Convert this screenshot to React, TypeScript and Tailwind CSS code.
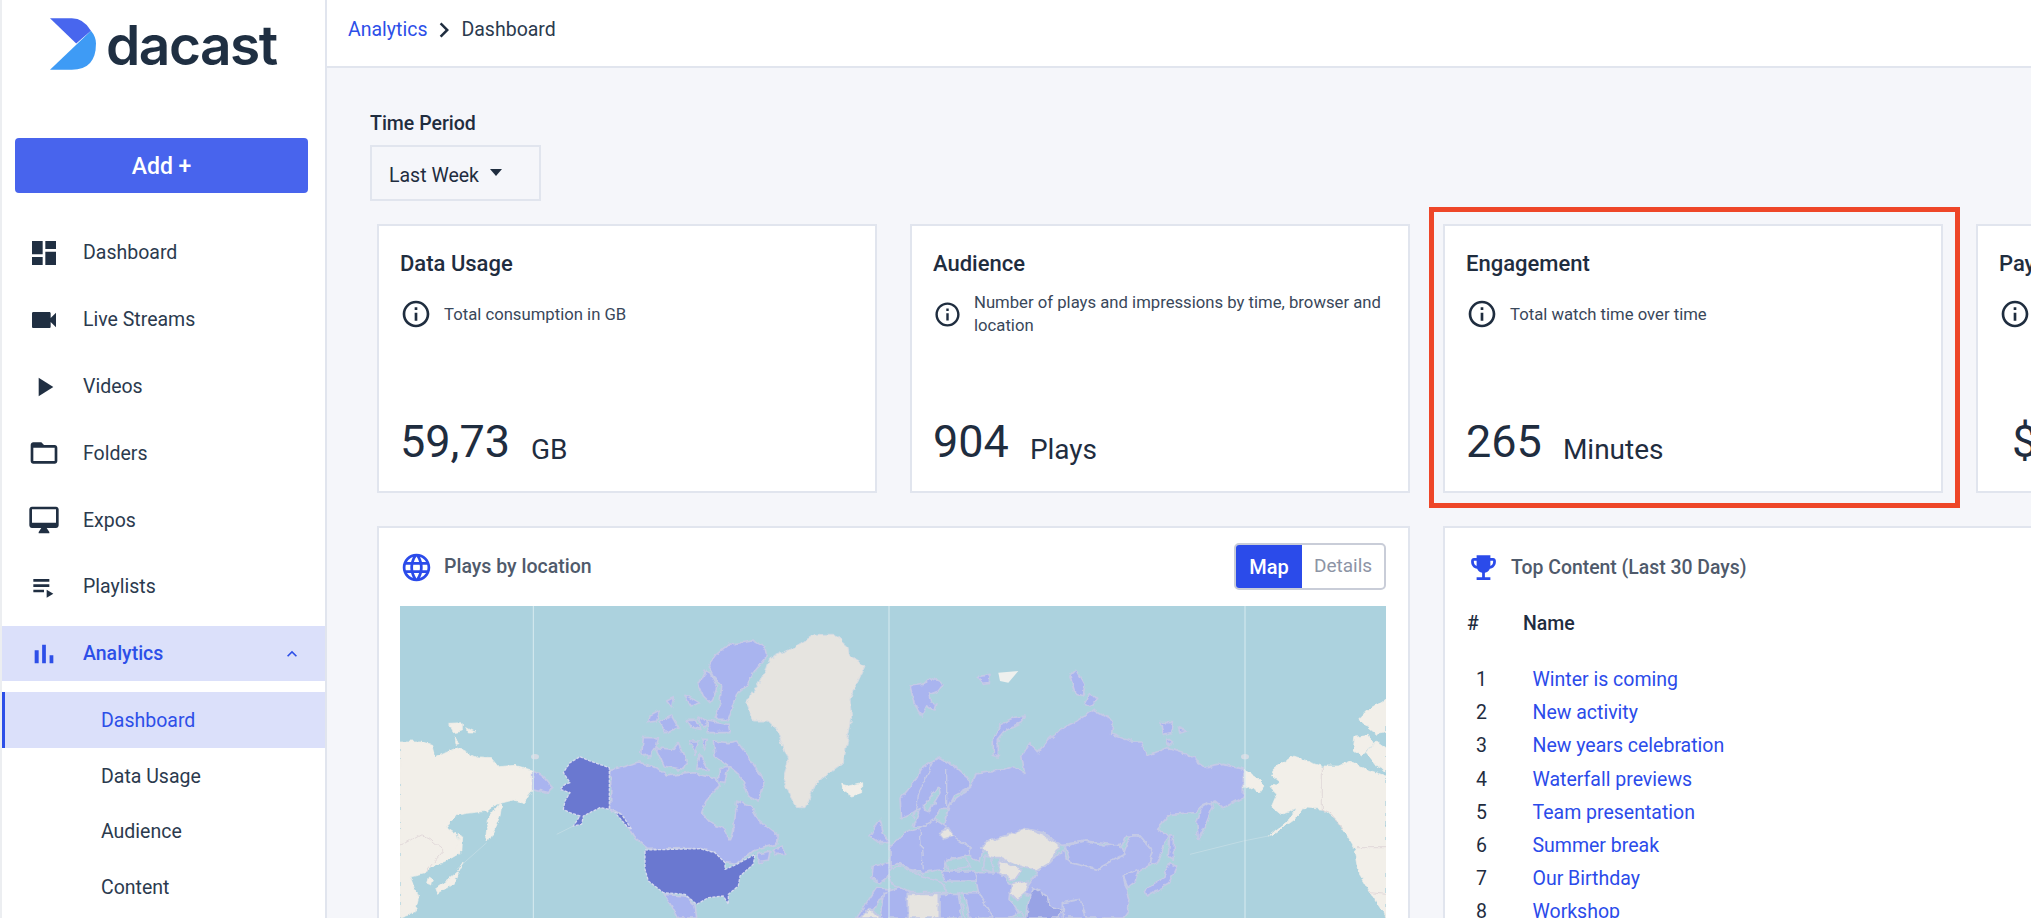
import React from "react";

const icons = {
  dashboard: "M3 13h8V3H3v10zm0 8h8v-6H3v6zm10 0h8V11h-8v10zm0-18v6h8V3h-8z",
  videocam: "M17 10.5V7c0-.55-.45-1-1-1H4c-.55 0-1 .45-1 1v10c0 .55.45 1 1 1h12c.55 0 1-.45 1-1v-3.5l4 4v-11l-4 4z",
  play: "M8 5v14l11-7z",
  folder: "M20 6h-8l-2-2H4c-1.1 0-1.99.9-1.99 2L2 18c0 1.1.9 2 2 2h16c1.1 0 2-.9 2-2V8c0-1.1-.9-2-2-2zm0 12H4V8h16v10z",
  desktop: "M21 2H3c-1.1 0-2 .9-2 2v12c0 1.1.9 2 2 2h7l-2 3v1h8v-1l-2-3h7c1.1 0 2-.9 2-2V4c0-1.1-.9-2-2-2zm0 12H3V4h18v10z",
  playlist: "M4 10h12v2H4zm0-4h12v2H4zm0 8h8v2H4zm10 0v6l5-3z",
  bars: "M5 9.2h3V19H5zM10.6 5h2.8v14h-2.8zm5.6 8H19v6h-2.8z",
  expandLess: "M12 8l-6 6 1.41 1.41L12 10.83l4.59 4.58L18 14z",
  chevronRight: "M10 6L8.59 7.41 13.17 12l-4.58 4.59L10 18l6-6z",
  info: "M11 7h2v2h-2zm0 4h2v6h-2zm1-9C6.48 2 2 6.48 2 12s4.48 10 10 10 10-4.48 10-10S17.52 2 12 2zm0 18c-4.41 0-8-3.59-8-8s3.59-8 8-8 8 3.59 8 8-3.59 8-8 8z",
  globe: "M11.99 2C6.47 2 2 6.48 2 12s4.47 10 9.99 10C17.52 22 22 17.52 22 12S17.52 2 11.99 2zm6.93 6h-2.95c-.32-1.25-.78-2.45-1.38-3.56 1.84.63 3.37 1.91 4.33 3.56zM12 4.04c.83 1.2 1.48 2.53 1.91 3.96h-3.82c.43-1.43 1.08-2.76 1.91-3.96zM4.26 14C4.1 13.36 4 12.69 4 12s.1-1.36.26-2h3.38c-.08.66-.14 1.32-.14 2 0 .68.06 1.34.14 2H4.26zm.82 2h2.95c.32 1.25.78 2.45 1.38 3.56-1.84-.63-3.37-1.9-4.33-3.56zm2.95-8H5.08c.96-1.66 2.49-2.93 4.33-3.56C8.81 5.55 8.35 6.75 8.03 8zM12 19.96c-.83-1.2-1.48-2.53-1.91-3.96h3.82c-.43 1.43-1.08 2.76-1.91 3.96zM14.34 14H9.66c-.09-.66-.16-1.32-.16-2 0-.68.07-1.35.16-2h4.68c.09.65.16 1.32.16 2 0 .68-.07 1.34-.16 2zm.25 5.56c.6-1.11 1.06-2.31 1.38-3.56h2.95c-.96 1.65-2.49 2.93-4.33 3.56zM16.36 14c.08-.66.14-1.32.14-2 0-.68-.06-1.34-.14-2h3.38c.16.64.26 1.31.26 2s-.1 1.36-.26 2h-3.38z",
  trophy: "M19 5h-2V3H7v2H5c-1.1 0-2 .9-2 2v1c0 2.55 1.92 4.63 4.39 4.94.63 1.5 1.98 2.63 3.61 2.96V19H7v2h10v-2h-4v-3.1c1.63-.33 2.98-1.46 3.61-2.96C19.08 12.63 21 10.55 21 8V7c0-1.1-.9-2-2-2zM5 8V7h2v3.82C5.84 10.4 5 9.3 5 8zm14 0c0 1.3-.84 2.4-2 2.82V7h2v1z",
};

function Icon({ d, className }: { d: string; className?: string }) {
  return (
    <svg viewBox="0 0 24 24" fill="currentColor" className={className}>
      <path d={d} />
    </svg>
  );
}

const navItems = [
  { label: "Dashboard", icon: icons.dashboard },
  { label: "Live Streams", icon: icons.videocam },
  { label: "Videos", icon: icons.play },
  { label: "Folders", icon: icons.folder },
  { label: "Expos", icon: icons.desktop },
  { label: "Playlists", icon: icons.playlist },
];

const stats = [
  { title: "Data Usage", desc: "Total consumption in GB", value: "59,73", unit: "GB" },
  { title: "Audience", desc: "Number of plays and impressions by time, browser and location", value: "904", unit: "Plays" },
  { title: "Engagement", desc: "Total watch time over time", value: "265", unit: "Minutes", marked: true },
  { title: "Paywall", desc: "Revenue from your paywall", value: "$", unit: "", indent: true },
];

const topContent = [
  "Winter is coming",
  "New activity",
  "New years celebration",
  "Waterfall previews",
  "Team presentation",
  "Summer break",
  "Our Birthday",
  "Workshop",
];

// map shapes, coordinates are 3x px from the map's top left corner
const creamLand = [
  "M0 405 L60 405 L95 415 L105 455 L170 425 L230 455 L275 458 L295 482 L345 478 L398 492 L398 555 L370 590 L340 582 L290 595 L265 615 L200 622 L165 630 L140 665 L170 685 L182 740 L130 770 L110 775 L75 800 L30 810 L55 880 L45 920 L0 936 Z",
  "M300 590 L285 610 L262 640 L258 690 L265 705 L285 665 L300 630 L305 600 Z",
  "M175 685 L185 690 L182 745 L172 735 Z",
  "M190 770 L170 800 L140 825 L105 850 L112 865 L160 835 L175 800 Z",
  "M85 810 L100 820 L95 840 L80 835 Z",
  "M145 352 L190 350 L190 375 L160 380 Z",
  "M200 365 L225 378 L205 378 Z",
  "M165 395 L180 410 L168 412 Z",
  "M1325 535 L1345 540 L1385 530 L1385 560 L1355 570 L1330 555 Z",
  "M2533 490 L2565 510 L2595 540 L2580 560 L2545 540 L2533 545 Z",
  "M2620 490 L2675 450 L2765 480 L2815 480 L2850 465 L2900 490 L2958 510 L2958 936 L2950 920 L2910 860 L2880 810 L2865 730 L2810 640 L2770 610 L2710 605 L2685 640 L2620 685 L2605 690 L2670 640 L2690 610 L2645 625 L2615 600 L2630 565 L2610 545 L2640 530 L2615 510 Z",
  "M2865 390 L2905 385 L2920 415 L2885 450 L2860 430 Z",
  "M2900 440 L2930 405 L2958 425 L2958 495 L2930 480 Z",
  "M2875 340 L2900 315 L2958 280 L2958 380 L2930 385 L2900 360 Z",
];

const grayLand = [
  "M1245 85 L1300 85 L1340 120 L1345 145 L1395 180 L1350 280 L1355 340 L1330 470 L1250 530 L1215 605 L1190 605 L1170 570 L1150 520 L1165 460 L1130 370 L1105 345 L1060 345 L1040 290 L1095 200 L1110 155 L1180 125 Z",
];

const lilacLand = [
  // canada and arctic islands
  "M632 490 L680 480 L715 468 L770 485 L800 510 L880 500 L950 520 L960 540 L920 580 L905 620 L930 650 L975 670 L990 705 L1000 680 L1010 585 L1050 600 L1075 640 L1135 690 L1130 715 L1060 735 L1010 775 L975 770 L950 745 L900 727 L745 730 L700 690 L660 625 L632 610 Z",
  "M985 115 L1060 105 L1095 125 L1100 150 L1060 200 L1040 240 L1010 265 L985 340 L945 340 L960 290 L965 240 L945 220 L925 180 L950 145 Z",
  "M915 195 L930 200 L950 240 L945 265 L930 290 L910 270 L895 235 Z",
  "M750 330 L780 315 L770 345 L745 350 Z",
  "M780 345 L815 330 L835 365 L795 380 Z",
  "M855 265 L900 290 L870 300 Z",
  "M860 340 L890 340 L900 370 L875 365 Z",
  "M800 285 L820 275 L815 305 Z",
  "M920 345 L985 355 L990 380 L925 380 Z",
  "M895 330 L925 350 L910 365 Z",
  "M730 395 L775 395 L770 420 L745 455 L725 440 Z",
  "M765 425 L820 430 L835 410 L860 470 L850 490 L790 480 Z",
  "M940 405 L985 410 L1010 405 L1050 460 L1095 525 L1075 585 L1045 570 L1030 530 L1010 500 L980 475 L945 450 Z",
  "M870 405 L895 405 L885 445 Z",
  "M905 400 L925 400 L915 430 Z",
  "M900 445 L925 490 L890 490 Z",
  "M958 490 L985 480 L975 530 L955 525 Z",
  "M1120 730 L1145 720 L1155 745 L1125 745 Z",
  "M1070 745 L1110 735 L1105 765 L1080 770 Z",
  "M790 865 L855 870 L885 895 L890 936 L835 936 L810 890 Z",
  "M398 495 L430 510 L460 545 L445 560 L405 550 L398 550 Z",
  // uk, france, west africa
  "M1410 690 L1440 640 L1450 680 L1470 710 L1440 710 Z",
  "M1420 780 L1470 770 L1480 800 L1440 830 L1415 815 Z",
  "M1480 720 L1530 720 L1530 780 L1470 770 Z",
  "M1370 936 L1400 890 L1430 845 L1480 850 L1430 890 L1410 936 Z",
  "M1450 860 L1530 835 L1530 936 L1440 936 Z",
  // svalbard and northern islands
  "M1530 240 L1570 235 L1590 215 L1630 235 L1615 255 L1590 265 L1595 290 L1610 295 L1605 315 L1580 300 L1565 330 L1545 300 Z",
  "M1735 212 L1770 205 L1768 230 L1750 232 Z",
  "M2030 190 L2055 235 L2050 270 L2025 260 L2010 210 Z",
  "M2070 260 L2090 280 L2070 300 L2055 290 Z",
  "M1875 330 L1860 350 L1820 370 L1795 400 L1795 450 L1780 445 L1780 400 L1800 355 L1840 335 Z",
  "M2280 350 L2320 350 L2315 380 L2290 385 Z",
  "M2335 365 L2360 375 L2340 382 Z",
  "M2300 395 L2320 410 L2305 420 Z",
  // russia
  "M1650 590 L1710 545 L1730 500 L1815 490 L1840 480 L1875 505 L1865 450 L1890 410 L1915 440 L1945 405 L1980 370 L2030 345 L2080 310 L2140 345 L2135 385 L2190 405 L2225 405 L2240 450 L2300 425 L2360 445 L2420 485 L2470 475 L2530 490 L2530 575 L2470 605 L2445 585 L2405 600 L2385 620 L2310 625 L2270 670 L2305 690 L2270 770 L2245 780 L2260 735 L2220 690 L2180 690 L2165 720 L2060 705 L1990 715 L1970 710 L1930 680 L1875 668 L1825 690 L1755 710 L1740 770 L1705 745 L1710 725 L1670 700 L1630 660 Z",
  // china, mongolia
  "M1990 730 L2000 760 L2090 790 L2170 745 L2190 690 L2220 690 L2260 735 L2245 780 L2210 800 L2170 810 L2180 850 L2190 880 L2185 915 L2170 936 L1950 936 L1935 880 L1870 860 L1915 795 L1950 770 Z",
  "M1995 720 L2055 705 L2110 720 L2160 715 L2175 745 L2090 790 L2010 770 Z",
  // japan, korea, kamchatka
  "M2170 810 L2215 790 L2205 830 L2185 845 Z",
  "M2310 770 L2330 780 L2305 835 L2240 870 L2235 850 L2290 815 L2300 790 Z",
  "M2310 685 L2320 690 L2320 760 L2305 750 Z",
  "M2435 585 L2440 600 L2415 660 L2395 700 L2390 650 L2405 605 Z",
  // scandinavia, europe, middle east
  "M1500 580 L1550 520 L1560 490 L1620 455 L1670 485 L1710 520 L1705 545 L1660 570 L1640 610 L1620 610 L1590 660 L1540 660 L1560 610 L1505 635 Z",
  "M1470 720 L1515 680 L1560 665 L1605 640 L1635 660 L1670 700 L1710 725 L1705 745 L1670 755 L1640 760 L1630 790 L1570 800 L1530 790 L1500 770 L1470 780 Z",
  "M1625 795 L1725 795 L1730 825 L1635 825 Z",
  "M1725 800 L1800 800 L1835 840 L1830 880 L1865 936 L1760 936 L1735 860 Z",
  "M1620 865 L1675 865 L1685 936 L1620 936 Z",
  "M1685 860 L1735 860 L1780 936 L1695 936 Z",
  "M1990 890 L2040 880 L2060 936 L1990 936 Z",
];

const grayPatches = [
  "M1745 720 L1770 705 L1830 685 L1875 668 L1930 685 L1980 720 L1950 770 L1910 795 L1860 780 L1800 755 L1770 755 Z",
  "M1800 760 L1865 790 L1840 825 L1795 800 Z",
  "M1835 835 L1885 825 L1875 860 L1850 880 L1830 860 Z",
  "M1615 680 L1645 665 L1660 690 L1630 700 Z",
  "M1525 865 L1615 865 L1615 936 L1525 936 Z",
  "M1380 936 L1410 905 L1440 936 Z",
];

const seaPatches = [
  "M1570 600 L1615 540 L1620 560 L1585 620 Z",
  "M1635 765 L1695 755 L1710 780 L1645 795 Z",
  "M1755 750 L1775 755 L1780 800 L1750 790 Z",
  "M1470 790 L1500 780 L1570 810 L1625 830 L1640 860 L1620 860 L1530 860 L1470 830 Z",
  "M1678 862 L1690 862 L1710 936 L1695 936 Z",
  "M1830 936 L1860 920 L1880 936 Z",
];

const darkLand = [
  "M540 452 L570 465 L628 485 L628 610 L600 605 L570 620 L550 630 L545 655 L520 660 L540 630 L510 620 L490 610 L495 585 L510 560 L480 550 L495 535 L510 530 L490 500 L510 470 Z",
  "M735 732 L900 728 L945 740 L975 770 L975 790 L1010 775 L1065 745 L1060 775 L1020 810 L1015 840 L985 865 L985 895 L970 870 L925 875 L890 895 L855 865 L790 860 L745 825 L735 790 Z",
  "M645 620 L665 625 L695 670 L680 660 Z",
];

function WorldMap() {
  return (
    <svg viewBox="0 0 2958 936" preserveAspectRatio="none" className="block h-full w-full blur-[0.6px]">
      <defs>
        {/* rough coastlines */}
        <filter id="coast" filterUnits="userSpaceOnUse" x="0" y="0" width="2958" height="936">
          <feTurbulence type="fractalNoise" baseFrequency="0.045" numOctaves="3" seed="4" />
          <feDisplacementMap in="SourceGraphic" scale="16" xChannelSelector="R" yChannelSelector="G" />
        </filter>
      </defs>
      <rect width="2958" height="936" fill="#acd2de" />
      <path d="M470 685 L520 660 M170 790 L260 710 M2370 745 L2530 705 L2605 690" stroke="#bfdbe4" strokeWidth="3" fill="none" />
      <g filter="url(#coast)">
        {creamLand.map((d, i) => (
          <path key={i} d={d} fill="#f2efe9" stroke="#f2efe9" strokeWidth="2" />
        ))}
        <path d="M0 720 L60 685 L90 700 L130 735 L100 770 L75 800 M2767 480 L2767 610 L2790 620 L2830 670 M2870 725 L2958 725 M2910 860 L2958 865" stroke="#d9cdd2" strokeWidth="2" fill="none" />
        {grayLand.map((d, i) => (
          <path key={i} d={d} fill="#e6e4e0" stroke="#d5dbe4" strokeWidth="3" strokeLinejoin="round" />
        ))}
        <g stroke="#c5cae6" strokeWidth="5" strokeLinejoin="round">
          {lilacLand.map((d, i) => (
            <path key={i} d={d} fill={i >= 33 && i < 36 ? "#adb7ef" : "#a9b4ef"} />
          ))}
          {grayPatches.map((d, i) => (
            <path key={i} d={d} fill="#e6e4e0" />
          ))}
          {seaPatches.map((d, i) => (
            <path key={i} d={d} fill="#acd2de" />
          ))}
          <path d="M1900 845 L1940 870 L1950 900 L1990 910 L1970 936 L1880 936 L1885 890 Z" fill="#98a3e5" />
          <path d="M1600 470 L1560 550 L1540 640 M1640 490 L1640 600 M1560 670 L1570 790" fill="none" strokeWidth="4" />
        </g>
      </g>
      <g stroke="#d5d9ee" strokeWidth="4" strokeDasharray="9 4" strokeLinejoin="round">
        {darkLand.map((d, i) => (
          <path key={i} d={d} fill="#6a78d0" />
        ))}
      </g>
      <path d="M1795 200 L1855 195 L1825 230 L1800 225 Z" fill="#eef0ee" />
      <ellipse cx="405" cy="452" rx="12" ry="8" fill="#d5dbe4" />
      <ellipse cx="2535" cy="452" rx="12" ry="8" fill="#d5dbe4" />
      <path d="M400 0 V936 M1467 0 V936 M2535 0 V936" stroke="#d8ebf0" strokeWidth="3" />
    </svg>
  );
}

function Sidebar() {
  return (
    <aside className="flex h-full w-[327px] shrink-0 flex-col border-r-2 border-l-2 border-r-[#e1e5ee] border-l-[#eceef1] bg-white pt-[18px] text-[#2b3a4e]">
      <div className="flex h-[52px] items-start pl-[48px]">
        <svg viewBox="150 55 137 153" className="h-[52px] w-[46px]">
          <path d="M150 208 L272 92 Q287 110 287 130 Q287 208 215 208 Z" fill="#3e9bf5" />
          <path d="M150 55 L215 55 Q250 55 272 92 L228 130 Z" fill="#4866ee" />
        </svg>
        <span className="mt-[-7px] ml-[10px] font-['Inter',sans-serif] text-[55px] leading-[68px] font-semibold tracking-[-1.5px] text-[#1f2f42]">
          dacast
        </span>
      </div>
      <button className="mt-[68px] mr-[17px] ml-[13px] h-[55px] rounded-[4px] bg-[#4864ed] pt-[3px] text-[23px] font-medium text-white">
        Add +
      </button>
      <nav className="mt-[32.5px] flex flex-col gap-[11.8px]">
        {navItems.map((item) => (
          <a key={item.label} className="flex h-[55px] items-center pl-[26px] text-[19.5px]">
            <Icon d={item.icon} className="h-[32px] w-[32px] text-[#202f42]" />
            <span className="ml-[23px]">{item.label}</span>
          </a>
        ))}
        <a className="flex h-[55px] items-center bg-[#dbe0fa] pl-[26px] text-[19.5px] font-medium text-[#2d4fe8]">
          <Icon d={icons.bars} className="h-[32px] w-[32px]" />
          <span className="ml-[23px]">Analytics</span>
          <Icon d={icons.expandLess} className="mr-[23px] ml-auto h-[20px] w-[20px]" />
        </a>
      </nav>
      <div className="mt-[11px] flex flex-col">
        <a className="flex h-[56px] items-center border-l-[3px] border-l-[#2d4fe8] bg-[#dbe0fa] pl-[96px] text-[19.5px] text-[#2d4fe8]">
          Dashboard
        </a>
        {["Data Usage", "Audience", "Content"].map((label) => (
          <a key={label} className="flex h-[55.7px] items-center pl-[99px] text-[19.5px]">
            {label}
          </a>
        ))}
      </div>
    </aside>
  );
}

function StatCard({ stat }: { stat: (typeof stats)[number] }) {
  const iconSize = stat.desc.length > 50 ? "h-[29px] w-[29px]" : "h-[32px] w-[32px]";
  return (
    <div className="relative h-[269px] w-[500px] shrink-0">
      {stat.marked && <div className="absolute -top-[17px] -right-[17px] -bottom-[15px] -left-[14px] border-[5px] border-[#ee4628]" />}
      <div className="flex h-full flex-col border-2 border-[#e1e5ee] bg-white pt-[25px] pr-[16px] pb-[23px] pl-[21px] text-[#1f2d3f]">
        <h3 className="text-[22px] leading-[26px] font-medium whitespace-nowrap">{stat.title}</h3>
        <div className="mt-[21px] flex h-[32px] items-center gap-[12px]">
          <Icon d={icons.info} className={`${iconSize} shrink-0 text-[#1f2d3f]`} />
          <p className="text-[16.7px] leading-[23px] text-[#39475a]">{stat.desc}</p>
        </div>
        <div className={`mt-auto flex items-baseline gap-[21px] ${stat.indent ? "pl-[13px]" : ""}`}>
          <span className="text-[45px] leading-[52px]">{stat.value}</span>
          <span className="translate-y-[2px] text-[28px] leading-[32px]">{stat.unit}</span>
        </div>
      </div>
    </div>
  );
}

function LocationCard() {
  return (
    <div className="w-[1033px] shrink-0 border-2 border-[#e1e5ee] bg-white pt-[14px] pr-[22px] pb-[20px] pl-[21px]">
      <div className="flex h-[49px] items-center justify-between">
        <div className="flex items-center gap-[11px] pt-[1px]">
          <Icon d={icons.globe} className="h-[33px] w-[33px] text-[#2b4bea]" />
          <span className="text-[19.5px] font-medium text-[#4f5a6b]">Plays by location</span>
        </div>
        <div className="flex h-[47px] w-[152px] overflow-hidden rounded-[5px] border-2 border-[#c9cdd8]">
          <span className="flex w-[66px] items-center justify-center bg-[#2b4bea] text-[20px] font-medium text-white">Map</span>
          <span className="flex flex-1 items-center justify-center text-[19px] text-[#8d94a5]">Details</span>
        </div>
      </div>
      <div className="mt-[15px] h-[312px] w-full">
        <WorldMap />
      </div>
    </div>
  );
}

function TopContentCard() {
  return (
    <div className="w-[1033px] shrink-0 border-2 border-[#e1e5ee] bg-white pt-[15px] pl-[22px]">
      <div className="flex h-[49px] items-center gap-[11px]">
        <Icon d={icons.trophy} className="h-[33px] w-[33px] text-[#2b4bea]" />
        <span className="text-[19.4px] font-medium text-[#4f5a6b]">Top Content (Last 30 Days)</span>
      </div>
      <div className="mt-[20px] flex h-[24px] items-center text-[19.5px] font-medium text-[#1f2d3f]">
        <span className="w-[56px]">#</span>
        <span>Name</span>
      </div>
      <div className="mt-[27px] flex flex-col">
        {topContent.map((name, i) => (
          <div key={name} className="flex h-[33.2px] items-center text-[19.5px]">
            <span className="w-[29px] text-center text-[#1f2d3f]">{i + 1}</span>
            <a className="ml-[36.5px] text-[#2b4bea]">{name}</a>
          </div>
        ))}
      </div>
    </div>
  );
}

export default function App() {
  return (
    <div className="flex h-[918px] w-[2031px] overflow-hidden bg-[#f5f6fa] font-['Roboto',sans-serif]">
      <Sidebar />
      <main className="flex min-w-0 flex-1 flex-col">
        <header className="flex h-[68px] shrink-0 items-center gap-[2px] border-b-2 border-[#e1e5ee] bg-white pb-[7px] pl-[21px] text-[19.5px]">
          <a className="text-[#2d4fe8]">Analytics</a>
          <Icon d={icons.chevronRight} className="h-[30px] w-[30px] text-[#1f2d3f]" />
          <span className="text-[#2b3a4e]">Dashboard</span>
        </header>
        <div className="pt-[44px] pl-[43px]">
          <label className="block text-[19.5px] leading-[24px] font-medium text-[#1f2d3f]">Time Period</label>
          <button className="mt-[9px] flex h-[56px] w-[171px] items-center border-2 border-[#e1e5ee] pt-[5px] pl-[17px] text-[19.5px] text-[#1f2d3f]">
            Last Week
            <span className="mt-[-6px] ml-[11px] h-0 w-0 border-t-[7px] border-r-[6.5px] border-l-[6.5px] border-t-[#1f2d3f] border-r-transparent border-l-transparent" />
          </button>
          <div className="mt-[23px] ml-[7px] flex gap-[33px]">
            {stats.map((stat) => (
              <StatCard key={stat.title} stat={stat} />
            ))}
          </div>
          <div className="mt-[33px] ml-[7px] flex gap-[33px]">
            <LocationCard />
            <TopContentCard />
          </div>
        </div>
      </main>
    </div>
  );
}
